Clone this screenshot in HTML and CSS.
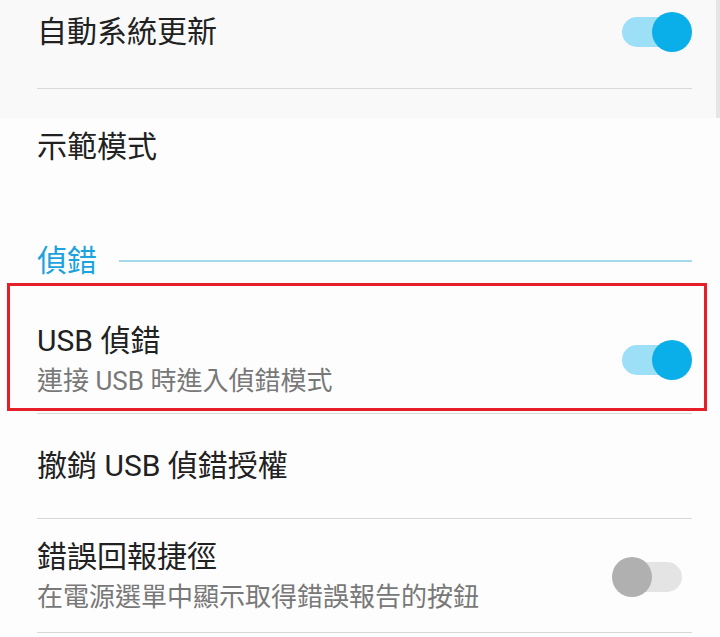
FILE: index.html
```html
<!DOCTYPE html>
<html lang="zh-Hant">
<head>
<meta charset="utf-8">
<title>設定</title>
<link rel="stylesheet" href="styles.css">
</head>
<body>
<div class="scrollbar"></div>
<main class="list">
  <div class="row row-first">
    <div class="texts"><div class="title">自動系統更新</div></div>
    <div class="switch on"><div class="track"></div><div class="knob"></div></div>
  </div>
  <div class="divider"></div>
  <div class="row row-plain row-demo">
    <div class="texts"><div class="title">示範模式</div></div>
  </div>
  <div class="category">
    <span class="category-label">偵錯</span>
    <span class="category-line"></span>
  </div>
  <div class="highlight">
    <div class="row row-two row-boxed">
      <div class="texts">
        <div class="title">USB 偵錯</div>
        <div class="summary">連接 USB 時進入偵錯模式</div>
      </div>
      <div class="switch on"><div class="track"></div><div class="knob"></div></div>
    </div>
  </div>
  <div class="divider divider-after-box"></div>
  <div class="row row-plain row-revoke">
    <div class="texts"><div class="title">撤銷 USB 偵錯授權</div></div>
  </div>
  <div class="divider"></div>
  <div class="row row-two row-bug">
    <div class="texts">
      <div class="title">錯誤回報捷徑</div>
      <div class="summary">在電源選單中顯示取得錯誤報告的按鈕</div>
    </div>
    <div class="switch off"><div class="track"></div><div class="knob"></div></div>
  </div>
  <div class="divider"></div>
</main>
</body>
</html>
```

FILE: styles.css
```css
html, body {
  margin: 0;
  padding: 0;
}
body {
  width: 720px;
  height: 637px;
  overflow: hidden;
  position: relative;
  background: linear-gradient(to bottom, #f9f9f9 0, #f9f9f9 118px, #fdfdfd 118px, #fdfdfd 100%);
  font-family: Roboto, "Noto Sans CJK TC", sans-serif;
  color: #212121;
}
.scrollbar {
  position: absolute;
  top: 0;
  right: 0;
  width: 4px;
  height: 118px;
  background: #e6e6e6;
}
.list {
  display: flex;
  flex-direction: column;
}
.row {
  display: flex;
  align-items: center;
  justify-content: space-between;
  padding: 0 28px 0 37px;
}
.texts {
  display: flex;
  flex-direction: column;
}
.title {
  font-size: 30px;
  line-height: 40px;
  color: #212121;
  white-space: nowrap;
}
.summary {
  font-size: 26px;
  line-height: 40px;
  color: #787878;
  white-space: nowrap;
}
.row-first {
  padding-top: 12px;
  padding-bottom: 36px;
}
.row-demo {
  padding-top: 38px;
  padding-bottom: 74px;
}
.row-revoke {
  padding-top: 32px;
  padding-bottom: 32px;
}
.row-bug {
  padding-top: 18px;
  padding-bottom: 15px;
}
.divider {
  height: 1px;
  background: #d8d8d8;
  margin: 0 28px 0 37px;
}
.divider-after-box {
  margin-top: 2px;
}
.category {
  display: flex;
  align-items: center;
  gap: 22px;
  padding: 0 28px 0 37px;
  height: 40px;
}
.category-label {
  font-size: 30px;
  line-height: 40px;
  color: #1ba3dc;
}
.category-line {
  flex: 1;
  height: 2px;
  background: #a6d8ec;
}
.highlight {
  margin: 2px 13px 0 7px;
  border: 3px solid #e61e28;
}
.row-boxed {
  padding: 35px 12px 7px 27px;
}
.row-boxed .switch {
  margin-top: -3px;
}
.switch {
  position: relative;
  width: 80px;
  height: 40px;
  flex: none;
}
.track {
  position: absolute;
  left: 10px;
  right: 10px;
  top: 5px;
  height: 30px;
  border-radius: 15px;
}
.knob {
  position: absolute;
  top: 0;
  width: 40px;
  height: 40px;
  border-radius: 50%;
}
.switch.on .track { background: #9ddff6; }
.switch.on .knob { left: 40px; background: #0aafea; }
.switch.off .track { background: #e4e4e4; }
.switch.off .knob { left: 0; background: #b0b0b0; }
```
